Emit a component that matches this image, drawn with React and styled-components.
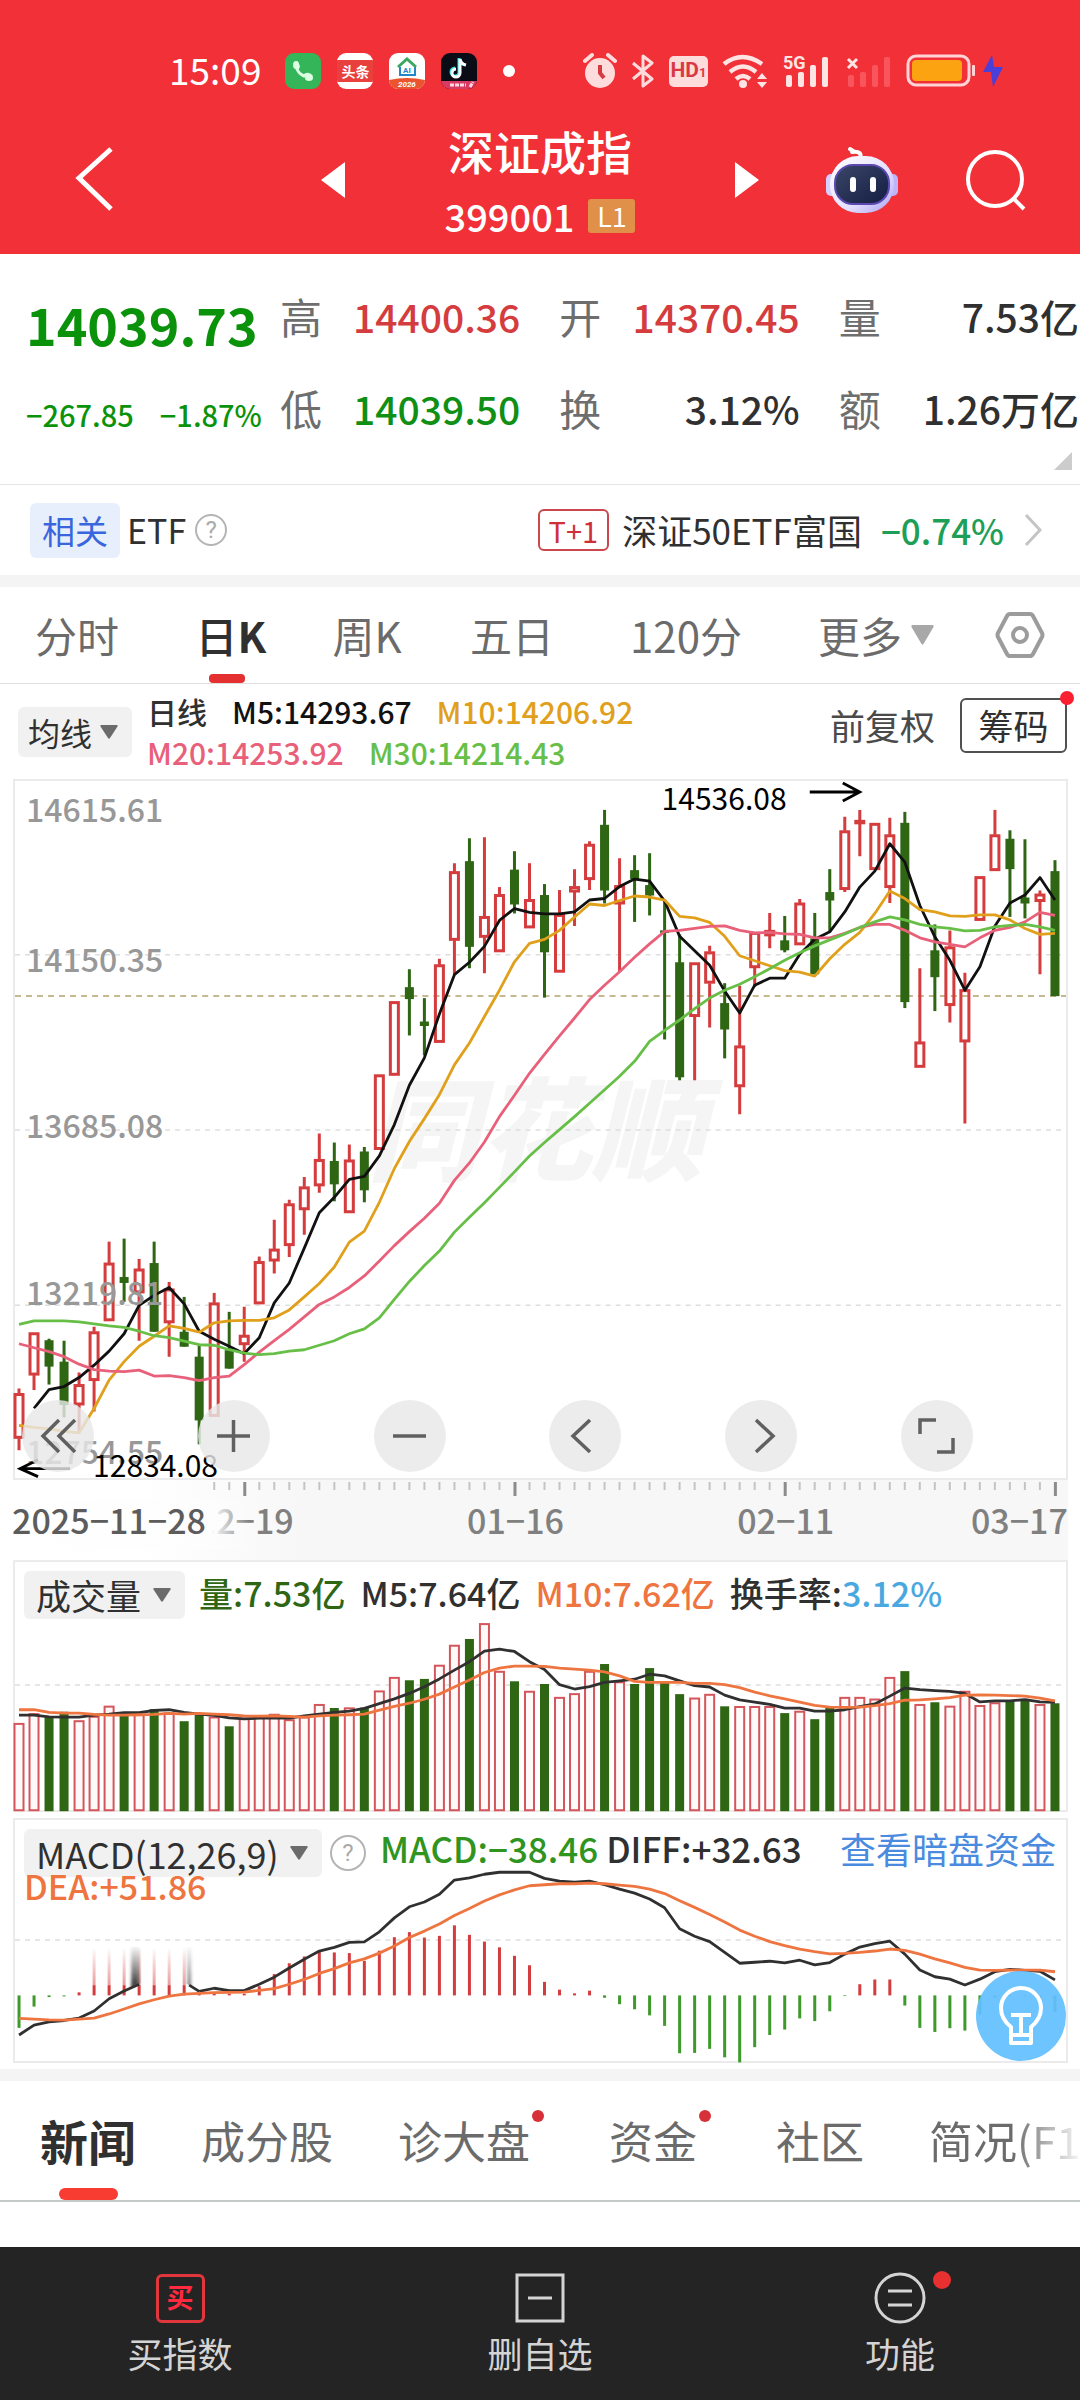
import React from "react";
import styled, { createGlobalStyle } from "styled-components";

const Global = createGlobalStyle`
  * { box-sizing: border-box; }
  body {
    margin: 0;
    background: #fff;
    color: #303030;
    font-family: "Noto Sans CJK SC", "Noto Sans", Roboto, sans-serif;
  }
  button, select {
    font: inherit;
    color: inherit;
    border: 0;
    background: none;
    padding: 0;
    margin: 0;
    cursor: pointer;
  }
  svg { display: block; }
`;

const RED = "#d43c3e";
const GREEN = "#2f6614";

/* ---------- market data ---------- */

// [direction, high, bodyTop, bodyBottom, low]
const CANDLES = [
  ["r", 1222, 1232, 1322, 1346], ["r", 1110, 1110, 1195, 1225], ["g", 1122, 1125, 1178, 1214],
  ["g", 1126, 1168, 1255, 1280], ["r", 1190, 1214, 1255, 1310], ["r", 1098, 1108, 1206, 1268],
  ["r", 927, 970, 1086, 1086], ["g", 921, 998, 1010, 1048], ["r", 962, 982, 1030, 1126],
  ["g", 927, 970, 1108, 1108], ["r", 1008, 1022, 1090, 1158], ["g", 1038, 1108, 1138, 1138],
  ["g", 1135, 1158, 1286, 1334], ["r", 1030, 1050, 1278, 1278], ["g", 1068, 1145, 1182, 1182],
  ["r", 1058, 1115, 1134, 1168], ["r", 957, 967, 1052, 1052], ["r", 883, 942, 966, 991],
  ["r", 843, 851, 935, 958], ["r", 797, 817, 863, 913], ["r", 710, 762, 815, 829],
  ["g", 728, 765, 812, 846], ["r", 732, 763, 869, 869], ["g", 737, 746, 824, 848],
  ["r", 592, 592, 742, 742], ["r", 445, 445, 593, 593], ["g", 380, 416, 440, 513],
  ["g", 438, 485, 494, 553], ["r", 359, 371, 527, 527], ["r", 167, 184, 322, 390],
  ["g", 117, 163, 335, 378], ["r", 115, 274, 316, 388], ["r", 215, 230, 345, 345],
  ["g", 143, 180, 250, 268], ["r", 167, 240, 297, 297], ["g", 209, 231, 346, 437],
  ["r", 221, 270, 386, 386], ["r", 179, 214, 225, 293], ["r", 123, 129, 200, 221],
  ["g", 60, 90, 222, 248], ["r", 157, 212, 249, 384], ["g", 151, 181, 199, 285],
  ["g", 147, 211, 232, 272], ["g", 240, 302, 307, 521], ["g", 310, 366, 597, 603],
  ["r", 367, 367, 475, 603], ["r", 333, 345, 408, 497], ["g", 408, 448, 501, 559],
  ["r", 413, 534, 616, 671], ["r", 306, 306, 377, 416], ["r", 267, 302, 313, 338],
  ["g", 273, 322, 342, 346], ["r", 239, 247, 331, 331], ["g", 267, 318, 390, 390],
  ["g", 179, 225, 242, 303], ["r", 74, 102, 220, 225], ["r", 60, 81, 88, 153],
  ["r", 87, 87, 180, 180], ["r", 76, 110, 216, 247], ["g", 64, 86, 446, 458],
  ["r", 378, 526, 577, 577], ["g", 290, 342, 396, 464], ["r", 302, 335, 453, 487],
  ["r", 387, 421, 526, 690], ["r", 194, 194, 282, 282], ["r", 60, 110, 182, 182],
  ["g", 101, 118, 179, 275], ["g", 119, 236, 248, 278], ["r", 222, 229, 244, 390],
  ["g", 161, 183, 434, 434],
];

const MA5 = [
  1262, 1224, 1218, 1200, 1175, 1147, 1112, 1055, 1035, 1019, 1052, 1107, 1123, 1137, 1152,
  1120, 1050, 1010, 940, 869, 838, 802, 796, 755, 692, 613, 558, 470, 391, 366, 334, 282, 258,
  266, 269, 269, 265, 241, 238, 214, 199, 203, 243, 314, 343, 372, 424, 468, 412, 398, 398,
  350, 320, 305, 265, 215, 183, 128, 165, 252, 315, 362, 422, 375, 293, 247, 231, 196, 241,
];
const MA10 = [
  1296, 1300, 1303, 1308, 1311, 1262, 1205, 1168, 1137, 1117, 1096, 1101, 1109, 1090, 1086,
  1085, 1085, 1080, 1064, 1038, 1011, 978, 928, 906, 848, 780, 726, 680, 632, 572, 528, 475,
  422, 365, 328, 320, 302, 275, 249, 252, 242, 233, 235, 241, 274, 277, 286, 314, 353, 363,
  373, 383, 386, 394, 359, 330, 306, 268, 223, 238, 260, 265, 273, 274, 271, 271, 281, 298,
  310, 308,
];
const MA20 = [
  1132, 1140, 1148, 1158, 1173, 1184, 1187, 1188, 1185, 1197, 1196, 1200, 1206, 1200, 1197,
  1174, 1149, 1126, 1103, 1078, 1053, 1038, 1019, 996, 966, 935, 907, 880, 850, 804, 769, 727,
  676, 633, 589, 551, 514, 478, 441, 412, 385, 356, 329, 304, 302, 298, 294, 293, 302, 307,
  306, 309, 310, 317, 317, 308, 296, 290, 290, 302, 317, 325, 330, 335, 317, 302, 296, 285,
  266, 272,
];
const MA30 = [
  1093, 1086, 1086, 1086, 1088, 1092, 1096, 1099, 1107, 1116, 1120, 1127, 1134, 1135, 1144,
  1151, 1154, 1152, 1147, 1144, 1135, 1126, 1112, 1102, 1080, 1043, 1007, 975, 946, 908, 878,
  849, 818, 787, 755, 728, 702, 676, 649, 622, 595, 565, 525, 503, 482, 459, 438, 422, 410,
  395, 379, 362, 347, 333, 321, 309, 296, 285, 275, 281, 290, 295, 298, 303, 302, 295, 292,
  290, 295, 302,
];

const VOLUME = [
  511, 482, 494, 478, 503, 490, 460, 485, 485, 470, 480, 506, 487, 492, 521, 496, 494, 484,
  500, 492, 455, 467, 465, 466, 415, 375, 385, 381, 339, 280, 263, 216, 357, 388, 416, 396,
  434, 423, 357, 337, 388, 396, 349, 392, 426, 436, 425, 462, 461, 461, 461, 482, 475, 500,
  467, 434, 434, 439, 375, 358, 455, 450, 460, 416, 458, 450, 446, 440, 455, 453,
];
const VOL_MA5 = [
  488, 488, 493, 494, 494, 488, 485, 481, 481, 474, 472, 480, 485, 489, 496, 499, 497, 497,
  497, 490, 485, 480, 476, 468, 454, 440, 424, 404, 381, 355, 330, 299, 293, 300, 330, 353,
  398, 411, 404, 391, 387, 382, 367, 372, 387, 401, 405, 429, 443, 450, 456, 467, 467, 476,
  476, 472, 463, 455, 432, 408, 413, 416, 418, 424, 449, 446, 446, 442, 449, 450,
];
const VOL_MA10 = [
  472, 472, 480, 482, 482, 486, 488, 488, 487, 486, 483, 485, 483, 485, 487, 490, 491, 490,
  492, 494, 490, 488, 487, 485, 473, 462, 453, 441, 426, 405, 384, 362, 349, 343, 343, 344,
  349, 352, 355, 360, 372, 388, 391, 391, 391, 394, 394, 398, 407, 420, 431, 440, 450, 459,
  464, 465, 464, 460, 454, 444, 443, 440, 436, 429, 428, 429, 430, 432, 438, 446,
];

const MACD_ZERO = 1317;
const MACD = [
  1413, 1350, 1322, 1320, 1308, 1175, 1175, 1175, 1175, 1175, 1175, 1175, 1309, 1312, 1312,
  1312, 1290, 1254, 1222, 1202, 1186, 1190, 1192, 1215, 1185, 1145, 1130, 1146, 1141, 1110,
  1138, 1158, 1175, 1200, 1228, 1277, 1300, 1311, 1303, 1324, 1343, 1358, 1376, 1407, 1488,
  1487, 1475, 1500, 1515, 1470, 1434, 1418, 1385, 1393, 1364, 1319, 1284, 1270, 1270, 1347,
  1413, 1425, 1414, 1421, 1374, 1324, 1320, 1320, 1324, 1366,
];
const DIFF_HEAD = [1434, 1405, 1395, 1391, 1384, 1363, 1327, 1304, 1284];
const DIFF = [
  1305, 1296, 1303, 1303, 1284, 1263, 1236, 1210, 1186, 1175, 1160, 1159, 1129, 1088, 1055,
  1041, 1018, 976, 970, 959, 953, 953, 953, 971, 979, 982, 979, 990, 1003, 1015, 1032, 1058,
  1120, 1142, 1158, 1190, 1222, 1219, 1216, 1221, 1213, 1227, 1220, 1195, 1174, 1164, 1157,
  1195, 1242, 1262, 1269, 1286, 1269, 1247, 1240, 1243, 1246, 1271,
];
const DEA = [
  1385, 1387, 1389, 1390, 1387, 1384, 1372, 1357, 1342, 1330, 1319, 1313, 1311, 1309, 1308,
  1307, 1302, 1297, 1284, 1270, 1252, 1238, 1221, 1209, 1192, 1171, 1146, 1127, 1106, 1081,
  1060, 1038, 1020, 1005, 993, 990, 987, 987, 985, 987, 991, 995, 1003, 1016, 1037, 1057, 1078,
  1100, 1124, 1142, 1158, 1170, 1180, 1188, 1194, 1193, 1190, 1186, 1180, 1184, 1195, 1209,
  1221, 1234, 1242, 1243, 1242, 1242, 1242, 1247,
];

const colX = (i) => 4 + i * 15;
const priceY = (v) => v / 2.01 - 1;
const volumeY = (v) => v / 2.958 - 12;
const macdY = (v) => v / 2.958 - 270;
const points = (series, scale, from = 0) =>
  series.map((v, i) => `${colX(i + from)},${scale(v).toFixed(1)}`).join(" ");

/* ---------- header ---------- */

const Header = styled.header`
  background: #f13038;
  color: #fff;
`;
const StatusBar = styled.div`
  display: flex;
  align-items: center;
  justify-content: space-between;
  padding: 48px 76px 0 169px;
`;
const StatusGroup = styled.div`
  display: flex;
  align-items: center;
  gap: ${(p) => p.$gap}px;
  height: 46px;
`;
const Clock = styled.span`
  font-size: 37px;
  line-height: 40px;
  padding-bottom: 4px;
  margin-right: 8px;
`;
const AppIcon = styled.span`
  display: flex;
  flex-direction: column;
  align-items: center;
  justify-content: center;
  width: 36px;
  height: 36px;
  border-radius: 9px;
  overflow: hidden;
  background: ${(p) => p.$bg};
`;
const AppWord = styled.span`
  align-self: stretch;
  background: #e8403c;
  color: #fff;
  font-size: 14px;
  font-weight: 700;
  line-height: 22px;
  text-align: center;
`;
const Dot = styled.span`
  width: ${(p) => p.$size}px;
  height: ${(p) => p.$size}px;
  border-radius: 50%;
  background: ${(p) => p.$color};
`;
const HdBadge = styled.span`
  border-radius: 5px;
  background: #ffdcdc;
  color: #d83a44;
  font: 700 21px/28px "Roboto", sans-serif;
  width: 39px;
  text-align: center;
  white-space: nowrap;
  small { font-size: 13px; }
`;
const TitleBar = styled.div`
  display: grid;
  grid-template-columns: 1fr 438px 1fr;
  align-items: center;
  padding: 26px 0 14px;
`;
const Side = styled.div`
  display: flex;
  align-items: center;
  gap: 66px;
  justify-content: ${(p) => (p.$end ? "flex-end" : "flex-start")};
  padding: ${(p) => (p.$end ? "0 53px 0 0" : "0 0 0 75px")};
`;
const Switcher = styled.div`
  display: flex;
  align-items: center;
  justify-content: space-between;
`;
const TitleBlock = styled.div`
  display: flex;
  flex-direction: column;
  align-items: center;
  gap: 12px;
`;
const Title = styled.h1`
  margin: 0;
  font-size: 46px;
  font-weight: 500;
  line-height: 60px;
`;
const Code = styled.div`
  display: flex;
  align-items: center;
  gap: 14px;
  font-size: 38px;
  font-weight: 500;
  line-height: 48px;
`;
const Level = styled.span`
  background: #e09048;
  border-radius: 3px;
  width: 47px;
  text-align: center;
  font-size: 27px;
  font-weight: 400;
  line-height: 34px;
`;

/* ---------- quote ---------- */

const Quote = styled.section`
  display: flex;
  padding: 38px 1px 14px 0;
`;
const Main = styled.div`
  flex: 0 0 280px;
  padding-left: 26px;
  color: #0a930a;
  white-space: nowrap;
`;
const Price = styled.div`
  font-size: 52px;
  font-weight: 700;
  line-height: 64px;
`;
const Change = styled.div`
  display: flex;
  gap: 26px;
  margin-top: 34px;
  font-size: 29px;
  font-weight: 500;
  line-height: 48px;
`;
const Stats = styled.div`
  flex: 1;
  display: grid;
  grid-template-columns: repeat(3, 1fr);
  align-content: start;
  gap: 44px 39px;
`;
const Stat = styled.div`
  display: flex;
  justify-content: space-between;
  font-size: 39px;
  font-weight: 500;
  line-height: 48px;
  white-space: nowrap;
  color: ${(p) => p.$color || "#303030"};
`;
const StatName = styled.span`
  color: #6e6e6e;
  font-size: 42px;
  font-weight: 400;
`;
const Expand = styled.button`
  display: block;
  margin: 0 8px 14px auto;
`;
const Related = styled.section`
  display: flex;
  align-items: center;
  height: 91px;
  padding: 0 38px 0 30px;
  border-top: 1px solid #e6e6e6;
  font-size: 35px;
  line-height: 48px;
`;
const RelatedTag = styled.span`
  background: #e8effc;
  color: #3a66dd;
  border-radius: 6px;
  padding: 0 12px;
  font-size: 33px;
  line-height: 55px;
  margin-right: 7px;
`;
const Help = styled.button`
  width: ${(p) => p.$size}px;
  height: ${(p) => p.$size}px;
  border: 2px solid #b4b4b4;
  border-radius: 50%;
  color: #aaa;
  font: 24px/28px "Roboto", sans-serif;
`;
const EtfName = styled.span`
  font-size: 34px;
  margin-right: 9px;
`;
const EtfLink = styled.a`
  display: flex;
  align-items: center;
  margin-left: auto;
  color: #303030;
  text-decoration: none;
  white-space: nowrap;
`;
const TradeTag = styled.span`
  border: 2px solid #c9474d;
  border-radius: 6px;
  color: #cf3038;
  font-size: 29px;
  line-height: 38px;
  padding: 0 9px;
  margin-right: 13px;
`;
const EtfChange = styled.span`
  color: #1d9f58;
  font-weight: 500;
  margin: 0 20px 0 19px;
`;
const Band = styled.div`
  height: 12px;
  background: #f4f4f4;
`;

/* ---------- period tabs ---------- */

const Periods = styled.nav`
  display: grid;
  grid-template-columns: 154fr 154fr 118fr 172fr 176fr 204fr 84fr;
  padding-right: 18px;
  height: 97px;
  border-bottom: 1px solid #e0e0e0;
`;
const Period = styled.button`
  position: relative;
  display: flex;
  align-items: center;
  justify-content: center;
  gap: 9px;
  font-size: 42px;
  line-height: 60px;
  font-weight: ${(p) => (p.$active ? 500 : 400)};
  color: ${(p) => (p.$active ? "#303030" : "#6b6b6b")};
  b { font-weight: 700; }
  &::after {
    content: "";
    display: ${(p) => (p.$active ? "block" : "none")};
    position: absolute;
    bottom: 0;
    left: calc(50% - 22px);
    width: 36px;
    height: 9px;
    border-radius: 4px;
    background: #e43030;
  }
`;

/* ---------- legends ---------- */

const MaBar = styled.div`
  display: flex;
  align-items: center;
  padding: 7px 13px 6px 18px;
`;
const PickerBox = styled.label`
  display: inline-grid;
  align-items: center;
  background: #f1f1f1;
  border-radius: 6px;
  font-size: ${(p) => p.$font}px;
  height: ${(p) => p.$height}px;
  & > * { grid-area: 1 / 1; }
  & > svg { justify-self: end; margin-right: 14px; pointer-events: none; }
`;
const PickerSelect = styled.select`
  appearance: none;
  color: #303030;
  font-weight: 400;
  line-height: 46px;
  padding: 0 ${(p) => p.$right}px 0 ${(p) => p.$left}px;
  outline: none;
`;
const MaLines = styled.div`
  margin-left: 15px;
  font-size: 30px;
  font-weight: 500;
  line-height: 41px;
`;
const MaLine = styled.div`
  display: flex;
  gap: 25px;
`;
const Tint = styled.span`
  color: ${(p) => p.$color};
  white-space: nowrap;
`;
const MaActions = styled.div`
  display: flex;
  align-items: center;
  gap: 25px;
  margin: 0 0 14px auto;
  font-size: 35px;
  line-height: 48px;
`;
const TextButton = styled.button`
  color: #4a4a4a;
`;
const ChipButton = styled.button`
  position: relative;
  width: 107px;
  height: 55px;
  border: 2px solid #505050;
  border-radius: 6px;
  font-size: 35px;
  line-height: 48px;
  & > span { position: absolute; top: -9px; right: -9px; }
`;

/* ---------- chart panels ---------- */

const Charts = styled.div`
  padding: 0 12px 6px 13px;
`;
const Panel = styled.section`
  display: grid;
  border: 2px solid #ebebeb;
  margin-bottom: ${(p) => p.$gap || 0}px;
  & > * { grid-area: 1 / 1; min-width: 0; }
`;
const Plot = styled.svg`
  width: 100%;
  height: auto;
  overflow: visible;
`;
const AxisText = styled.text`
  font-size: 32px;
  font-weight: 500;
  fill: #989898;
`;
const MarkText = styled.text`
  font-size: 30px;
  fill: #000;
`;
const DateText = styled.text`
  font-size: 34px;
  font-weight: 500;
  fill: ${(p) => (p.$strong ? "#5c5c5c" : "#808080")};
`;
const Watermark = styled.text`
  font-size: 112px;
  font-weight: 900;
  font-style: italic;
  fill: #f5f5f5;
`;
const Controls = styled.div`
  align-self: end;
  display: flex;
  justify-content: space-between;
  padding: 0 93px 6px 7px;
`;
const Round = styled.button`
  display: grid;
  place-items: center;
  width: 72px;
  height: 72px;
  border-radius: 50%;
  background: rgba(232, 232, 232, 0.82);
`;
const Legend = styled.div`
  display: flex;
  align-items: flex-start;
  align-self: start;
  padding: 9px 10px 0 9px;
  font-size: 34px;
  font-weight: 500;
  line-height: ${(p) => p.$line}px;
`;
const LegendItem = styled.span`
  color: ${(p) => p.$color || "#303030"};
  margin-left: ${(p) => p.$gap}px;
  white-space: nowrap;
`;
const MacdLegend = styled.div`
  align-self: start;
`;
const MacdItem = styled(LegendItem)`
  font-size: 35px;
`;
const DeaLine = styled.div`
  color: #ee7440;
  font-size: 34px;
  font-weight: 500;
  line-height: 18px;
  padding-left: 9px;
`;
const HelpSlot = styled.span`
  display: flex;
  align-items: center;
  height: 48px;
  padding-left: 8px;
`;
const FundLink = styled.a`
  margin-left: auto;
  color: #4a8be0;
  font-size: 36px;
  font-weight: 400;
  text-decoration: none;
  white-space: nowrap;
`;
const Fab = styled.button`
  justify-self: end;
  align-self: end;
  display: grid;
  place-items: center;
  width: 90px;
  height: 90px;
  border-radius: 50%;
  background: rgba(98, 191, 255, 0.92);
`;

/* ---------- content tabs and bottom bar ---------- */

const NewsTabs = styled.nav`
  display: flex;
  align-items: center;
  gap: 65px;
  height: 121px;
  padding-left: 40px;
  border-bottom: 2px solid #c4caca;
  overflow: hidden;
`;
const NewsTab = styled.button`
  position: relative;
  flex: none;
  display: flex;
  height: 119px;
  font-size: ${(p) => (p.$active ? 48 : 44)}px;
  line-height: 119px;
  font-weight: ${(p) => (p.$active ? 700 : 400)};
  color: ${(p) => (p.$active ? "#303030" : "#6b6b6b")};
  & > span { margin: 29px 0 0 2px; }
  &:last-child {
    background: linear-gradient(to right, #6b6b6b 84px, rgba(107, 107, 107, 0.1) 148px);
    background-clip: text;
    color: transparent;
  }
  &::after {
    content: "";
    display: ${(p) => (p.$active ? "block" : "none")};
    position: absolute;
    bottom: 0;
    left: calc(50% - 29px);
    width: 59px;
    height: 12px;
    border-radius: 6px;
    background: #f83c32;
  }
`;
const Feed = styled.main`
  height: 45px;
`;
const BottomBar = styled.nav`
  display: grid;
  grid-template-columns: repeat(3, 1fr);
  background: #242424;
  padding: 25px 0 18px;
`;
const BottomItem = styled.button`
  display: flex;
  flex-direction: column;
  align-items: center;
  color: #d4d4d4;
  font-size: 35px;
  line-height: 58px;
`;
const BottomIcon = styled.span`
  position: relative;
  display: grid;
  place-items: center;
  height: 52px;
`;
const BottomDot = styled(Dot)`
  position: absolute;
  top: -1px;
  right: -25px;
`;
const BuyBox = styled.span`
  border: 3px solid #e0363c;
  border-radius: 6px;
  width: 49px;
  height: 49px;
  color: #ff2a40;
  font-size: 27px;
  font-weight: 700;
  line-height: 40px;
  text-align: center;
`;

/* ---------- drawings ---------- */

const Caret = ({ w = 18, h = 14, color = "#6b6b6b" }) => (
  <svg width={w} height={h} viewBox="0 0 18 14" preserveAspectRatio="none" aria-hidden="true">
    <path d="M1 0h16q1 0 .5 1.500L10 13q-1 1.500-2 0L.5 1.500Q0 0 1 0z" fill={color} />
  </svg>
);

const Robot = () => (
  <svg width="74" height="68" viewBox="0 0 74 68" aria-hidden="true">
    <defs>
      <linearGradient id="shell" x1="0" y1="0" x2="1" y2="1">
        <stop offset="0" stopColor="#fff" />
        <stop offset="0.6" stopColor="#e4e0ff" />
        <stop offset="1" stopColor="#a9a0f0" />
      </linearGradient>
      <linearGradient id="visor" x1="0" y1="0" x2="1" y2="1">
        <stop offset="0" stopColor="#3a4668" />
        <stop offset="1" stopColor="#141d42" />
      </linearGradient>
    </defs>
    <path d="M35 13c2-6-1-8-8-7M28 5l-3-2" stroke="#fff" strokeWidth="4" fill="none" strokeLinecap="round" />
    <rect x="1" y="28" width="11" height="22" rx="5" fill="#d5d0ff" />
    <rect x="62" y="28" width="11" height="22" rx="5" fill="#bdb4fa" />
    <rect x="5" y="10" width="64" height="57" rx="28" fill="url(#shell)" />
    <rect x="10" y="19" width="54" height="39" rx="18" fill="url(#visor)" stroke="#5b48b0" strokeWidth="2" />
    <rect x="25" y="31" width="6" height="15" rx="3" fill="#fff" />
    <rect x="45" y="31" width="6" height="15" rx="3" fill="#fff" />
  </svg>
);

const Signal = ({ dim }) => (
  <svg width="48" height="36" viewBox="0 0 48 36" aria-hidden="true">
    {[0, 1, 2, 3].map((n) => (
      <rect
        key={n}
        x={4 + n * 12}
        y={[22, 19, 12, 4][n]}
        width="6"
        height={[12, 15, 22, 30][n]}
        rx="2"
        fill={dim ? "#f8565c" : "#ffe4e4"}
      />
    ))}
    {dim ? (
      <path d="M4 6l9 9M13 6l-9 9" stroke="#ffe4e4" strokeWidth="3" />
    ) : (
      <text x="1" y="16" fontSize="18" fontWeight="700" fontFamily="Roboto" fill="#ffe4e4">5G</text>
    )}
  </svg>
);

const StatusIcons = () => (
  <StatusGroup $gap={14}>
    <svg width="34" height="36" viewBox="0 0 34 36" aria-hidden="true">
      <circle cx="17" cy="20" r="15" fill="#ffdcdc" />
      <path d="M2 8l7-6M32 8l-7-6" stroke="#ffdcdc" strokeWidth="4" strokeLinecap="round" />
      <path d="M17 12v8l4 5" stroke="#d83a44" strokeWidth="4" fill="none" />
    </svg>
    <svg width="24" height="34" viewBox="0 0 24 34" aria-hidden="true">
      <path d="M2 9l19 16-9 7V2l9 7L2 25" fill="none" stroke="#ffdcdc" strokeWidth="3" strokeLinejoin="round" />
    </svg>
    <HdBadge>HD<small>1</small></HdBadge>
    <svg width="46" height="36" viewBox="0 0 46 36" aria-hidden="true">
      <g fill="none" stroke="#ffe4e4" strokeWidth="4.500">
        <path d="M2 11q18-14 38 0" />
        <path d="M8 19q13-11 26 0" />
        <path d="M14 26q7-6 14 0" />
      </g>
      <circle cx="21" cy="31" r="4" fill="#ffe4e4" />
      <path d="M35 26l5-6 5 6zM35 29l5 6 5-6z" fill="#ffe4e4" />
    </svg>
    <Signal />
    <Signal dim />
    <svg width="98" height="36" viewBox="0 0 98 36" aria-hidden="true">
      <rect x="2" y="3" width="61" height="29" rx="8" fill="none" stroke="#ffd4d6" strokeWidth="3" />
      <rect x="6" y="7" width="50" height="21" rx="4" fill="#fca311" />
      <rect x="66" y="12" width="3" height="11" rx="1" fill="#ffd4d6" />
      <path d="M86 2L77 19h8l2 15 10-20h-9z" fill="#4a3fd8" />
    </svg>
  </StatusGroup>
);

const Candle = ({ data: [dir, high, top, bottom, low], index }) => {
  const x = colX(index);
  const y1 = priceY(top);
  const y2 = priceY(bottom);
  if (dir === "g") {
    return (
      <g fill={GREEN}>
        <rect x={x - 1.5} y={priceY(high)} width="3" height={priceY(low) - priceY(high)} />
        <rect x={x - 4.5} y={y1} width="9" height={y2 - y1} />
      </g>
    );
  }
  return (
    <g stroke={RED} strokeWidth="3" fill="none">
      <path d={`M${x} ${priceY(high)}V${y1}M${x} ${y2}V${priceY(low)}`} />
      <rect x={x - 4} y={y1 + 1} width="8" height={Math.max(y2 - y1 - 2, 1)} />
    </g>
  );
};

const Dashes = ({ y, color = "#dedede", dash = "5 5" }) => (
  <path d={`M0 ${y}H1050`} stroke={color} strokeWidth="1.5" strokeDasharray={dash} />
);

const Trace = ({ series, scale, color, from, width = 2.8 }) => (
  <polyline
    points={points(series, scale, from)}
    fill="none"
    stroke={color}
    strokeWidth={width}
    strokeLinejoin="round"
  />
);

const PricePlot = () => (
  <Plot viewBox="0 0 1050 696" role="img" aria-label="日K线">
    <Watermark x="352" y="391">同花顺</Watermark>
    <Dashes y={priceY(351)} />
    <Dashes y={priceY(703)} />
    <Dashes y={priceY(1055)} />
    <Dashes y={priceY(434)} color="#b3a36e" dash="6 5" />
    {CANDLES.map((c, i) => <Candle key={i} data={c} index={i} />)}
    <Trace series={MA5} scale={priceY} from={1} color="#111" />
    <Trace series={MA10} scale={priceY} color="#e0a01c" />
    <Trace series={MA20} scale={priceY} color="#e8607a" />
    <Trace series={MA30} scale={priceY} color="#68bf48" />
    {[["14615.61", 84], ["14150.35", 386], ["13685.08", 719], ["13219.81", 1055], ["12754.55", 1373]].map(
      ([t, v]) => <AxisText key={t} x="11" y={Math.round(priceY(v))}>{t}</AxisText>
    )}
    <MarkText x="646" y="29">14536.08</MarkText>
    <MarkText x="78" y="695">12834.08</MarkText>
    <g fill="none" stroke="#000" strokeWidth="2.8">
      <path d="M794 11h50M827 2l17 9-17 9" />
      <path d="M55 687H6M23 678L5 687l18 8" />
    </g>
  </Plot>
);

const DateAxis = () => (
  <Plot viewBox="0 0 1054 80" aria-label="日期">
    <defs>
      <linearGradient id="axisShade" x1="0" x2="1" y1="0" y2="0">
        <stop offset="0" stopColor="#fff" />
        <stop offset="0.12" stopColor="#fff" />
        <stop offset="0.28" stopColor="#f7f7f7" />
        <stop offset="1" stopColor="#f7f7f7" />
      </linearGradient>
      <linearGradient id="dateFade" x1="0" x2="1" y1="0" y2="0">
        <stop offset="0" stopColor="#fff" />
        <stop offset="0.84" stopColor="#fdfdfd" />
        <stop offset="1" stopColor="#fdfdfd" stopOpacity="0" />
      </linearGradient>
    </defs>
    <rect width="1054" height="80" fill="url(#axisShade)" />
    {CANDLES.map((_, i) => {
      if (i < 13) return null;
      const major = (i - 15) % 18 === 0;
      return (
        <rect key={i} x={colX(i) + 1} y="2" width={major ? 3 : 2} height={major ? 14 : 8} fill={major ? "#8c8c8c" : "#c4c4c4"} />
      );
    })}
    <DateText x="232" y="54" textAnchor="middle">12−19</DateText>
    <DateText x="502" y="54" textAnchor="middle">01−16</DateText>
    <DateText x="772" y="54" textAnchor="middle">02−11</DateText>
    <DateText x="1054" y="54" textAnchor="end">03−17</DateText>
    <rect y="20" width="236" height="50" fill="url(#dateFade)" />
    <DateText x="-1" y="54" $strong>2025−11−28</DateText>
  </Plot>
);

const VolumePlot = () => (
  <Plot viewBox="0 0 1050 248" role="img" aria-label="成交量">
    <Dashes y={volumeY(399)} />
    {VOLUME.map((v, i) => {
      const up = CANDLES[i][0] === "r";
      const y = volumeY(v);
      return up ? (
        <rect key={i} x={colX(i) - 4.5} y={y + 1} width="9" height={247 - y} fill="#fffafa" stroke="#d4565c" strokeWidth="2" />
      ) : (
        <rect key={i} x={colX(i) - 4.5} y={y} width="9" height={249 - y} fill={GREEN} />
      );
    })}
    <Trace series={VOL_MA5} scale={volumeY} color="#303030" />
    <Trace series={VOL_MA10} scale={volumeY} color="#ee7440" />
  </Plot>
);

const MacdPlot = () => (
  <Plot viewBox="0 0 1050 241" role="img" aria-label="MACD">
    <defs>
      <linearGradient id="redFade" x1="0" x2="0" y1="0" y2="1">
        <stop offset="0" stopColor={RED} stopOpacity="0" />
        <stop offset="0.78" stopColor={RED} stopOpacity="0.5" />
        <stop offset="0.8" stopColor={RED} />
      </linearGradient>
      <linearGradient id="inkFade" x1="0" x2="0" y1="0" y2="1">
        <stop offset="0" stopColor="#303030" stopOpacity="0.05" />
        <stop offset="0.6" stopColor="#303030" stopOpacity="0.6" />
        <stop offset="1" stopColor="#303030" />
      </linearGradient>
      <filter id="soft" x="-50%" width="200%"><feGaussianBlur stdDeviation="1.5 0" /></filter>
    </defs>
    <Dashes y={macdY(1153)} />
    {MACD.map((v, i) => {
      const top = macdY(Math.min(v, MACD_ZERO));
      const bottom = macdY(Math.max(v, MACD_ZERO));
      const fill = v > MACD_ZERO ? "#3f9a2c" : i >= 5 && i <= 11 ? "url(#redFade)" : RED;
      return <rect key={i} x={colX(i) - 1.5} y={top} width="3" height={bottom - top} fill={fill} />;
    })}
    <path d="M116 127h8v36l-8 4z" fill="url(#inkFade)" filter="url(#soft)" />
    <path d="M172 127h4v40l-4-4z" fill="url(#inkFade)" opacity="0.6" filter="url(#soft)" />
    <Trace series={DIFF_HEAD} scale={macdY} color="#303030" />
    <path d={`M174 165L184 ${macdY(1305)}`} stroke="#303030" strokeWidth="2.8" />
    <Trace series={DIFF} scale={macdY} from={12} color="#303030" />
    <Trace series={DEA} scale={macdY} color="#ee7440" />
  </Plot>
);

const Picker = ({ label, value, font = 35, height = 48, left = 12, right = 43 }) => (
  <PickerBox $font={font} $height={height}>
    <PickerSelect aria-label={label} $left={left} $right={right}>
      <option>{value}</option>
    </PickerSelect>
    <Caret />
  </PickerBox>
);

const STATS = [
  ["高", "14400.36", "#d43c3e"],
  ["开", "14370.45", "#d43c3e"],
  ["量", "7.53亿"],
  ["低", "14039.50", "#0f8f14"],
  ["换", "3.12%"],
  ["额", "1.26万亿"],
];

const CONTROL_ICONS = [
  ["最早", "M20 3L4 19l16 16M36 3L20 19l16 16"],
  ["放大", "M3 19h33M19.500 3v32"],
  ["缩小", "M3 19h33"],
  ["向左", "M24 3L7 19l17 16"],
  ["向右", "M14 3l17 16-17 16"],
  ["全屏", "M3 17V3h16M36 21v14H20"],
];

const NEWS_TABS = [
  ["新闻"], ["成分股"], ["诊大盘", true], ["资金", true], ["社区"], ["简况(F10)"],
];

export default function App() {
  return (
    <>
      <Global />
      <Header>
        <StatusBar>
          <StatusGroup $gap={16}>
            <Clock>15:09</Clock>
            <AppIcon $bg="#34b55a">
              <svg width="24" height="24" viewBox="0 0 24 24" aria-hidden="true">
                <path d="M5 3q4 4 1 7 2 5 7 7 4-4 8 1" fill="none" stroke="#dcffe4" strokeWidth="3" />
                <ellipse cx="5" cy="6" rx="3" ry="4" fill="#dcffe4" />
                <ellipse cx="18" cy="19" rx="4" ry="3" fill="#dcffe4" />
              </svg>
            </AppIcon>
            <AppIcon $bg="#fff"><AppWord>头条</AppWord></AppIcon>
            <AppIcon $bg="#fff">
              <svg width="36" height="36" viewBox="0 0 36 36" aria-hidden="true">
                <path d="M11 14v8h15v-8" fill="none" stroke="#2387c8" strokeWidth="2" />
                <path d="M9 14L18 6l9 8" fill="none" stroke="#3aa860" strokeWidth="3" />
                <text x="14" y="20" fontSize="8" fontWeight="700" fill="#2387c8" fontFamily="Roboto">AI</text>
                <path d="M0 27q18-4 36 0v9H0z" fill="#ea5530" />
                <text x="9" y="34" fontSize="8" fontWeight="700" fontStyle="italic" fill="#fff" fontFamily="Roboto">2026</text>
              </svg>
            </AppIcon>
            <AppIcon $bg="#0c0c16">
              <svg width="36" height="36" viewBox="0 0 36 36" aria-hidden="true">
                <path d="M18 5v14a4 4 0 1 1-4-4M18 6q1 5 6 6" fill="none" stroke="#28e0e0" strokeWidth="3" />
                <path d="M19 6v14a4 4 0 1 1-4-4M19 6q1 5 6 6" fill="none" stroke="#fff" strokeWidth="3" />
                <path d="M0 28h36v8H0z" fill="#d83a62" />
                <path d="M9 32h16M29 34l3-5" stroke="#ffd8e4" strokeWidth="3" strokeDasharray="4 1" />
              </svg>
            </AppIcon>
            <StatusGroup $gap={0}>
              <svg width="10" height="12" aria-hidden="true" />
              <Dot $size={12} $color="#fff" />
            </StatusGroup>
          </StatusGroup>
          <StatusIcons />
        </StatusBar>
        <TitleBar>
          <Side>
            <button aria-label="返回">
              <svg width="40" height="66" viewBox="0 0 40 66" aria-hidden="true">
                <path d="M36 2L4 31l32 31" fill="none" stroke="#fff" strokeWidth="5" />
              </svg>
            </button>
          </Side>
          <Switcher>
            <button aria-label="上一个">
              <svg width="24" height="36" viewBox="0 0 24 36" aria-hidden="true"><path d="M24 0v36L0 18z" fill="#fff" /></svg>
            </button>
            <TitleBlock>
              <Title>深证成指</Title>
              <Code>399001<Level>L1</Level></Code>
            </TitleBlock>
            <button aria-label="下一个">
              <svg width="24" height="36" viewBox="0 0 24 36" aria-hidden="true"><path d="M0 0v36l24-18z" fill="#fff" /></svg>
            </button>
          </Switcher>
          <Side $end>
            <button aria-label="智能助手"><Robot /></button>
            <button aria-label="搜索">
              <svg width="62" height="62" viewBox="0 0 62 62" aria-hidden="true">
                <circle cx="30" cy="30" r="27" fill="none" stroke="#fff" strokeWidth="4" />
                <path d="M48 49l11 11" stroke="#fff" strokeWidth="4" />
              </svg>
            </button>
          </Side>
        </TitleBar>
      </Header>

      <Quote>
        <Main>
          <Price>14039.73</Price>
          <Change><span>−267.85</span><span>−1.87%</span></Change>
        </Main>
        <Stats>
          {STATS.map(([name, value, color]) => (
            <Stat key={name} $color={color}><StatName>{name}</StatName>{value}</Stat>
          ))}
        </Stats>
      </Quote>
      <Expand aria-label="展开">
        <svg width="18" height="18" viewBox="0 0 18 18" aria-hidden="true"><path d="M18 0v18H0z" fill="#ccc" /></svg>
      </Expand>

      <Related>
        <RelatedTag>相关</RelatedTag>
        <EtfName>ETF</EtfName>
        <Help $size={32} aria-label="ETF说明">?</Help>
        <EtfLink href="#etf">
          <TradeTag>T+1</TradeTag>
          深证50ETF富国
          <EtfChange>−0.74%</EtfChange>
          <svg width="18" height="34" viewBox="0 0 18 34" aria-hidden="true">
            <path d="M2 2l14 15L2 32" fill="none" stroke="#c4c4c4" strokeWidth="3" />
          </svg>
        </EtfLink>
      </Related>
      <Band />

      <Periods>
        <Period>分时</Period>
        <Period $active><span>日<b>K</b></span></Period>
        <Period>周K</Period>
        <Period>五日</Period>
        <Period>120分</Period>
        <Period>更多<Caret w={23} h={20} color="#a8a8a8" /></Period>
        <Period aria-label="设置">
          <svg width="50" height="48" viewBox="0 0 50 48" aria-hidden="true">
            <g fill="none" stroke="#9c9c9c" strokeWidth="4" strokeLinejoin="round">
              <path d="M15 3h20q2 0 3 2l9 17q1 2 0 4l-9 17q-1 2-3 2H15q-2 0-3-2L3 26q-1-2 0-4l9-17q1-2 3-2z" />
              <circle cx="25" cy="24" r="7" />
            </g>
          </svg>
        </Period>
      </Periods>

      <MaBar>
        <Picker label="指标" value="均线" font={32} height={50} left={10} right={39} />
        <MaLines>
          <MaLine>
            <Tint>日线</Tint>
            <Tint $color="#111">M5:14293.67</Tint>
            <Tint $color="#e0a01c">M10:14206.92</Tint>
          </MaLine>
          <MaLine>
            <Tint $color="#e8607a">M20:14253.92</Tint>
            <Tint $color="#68bf48">M30:14214.43</Tint>
          </MaLine>
        </MaLines>
        <MaActions>
          <TextButton>前复权</TextButton>
          <ChipButton>筹码<Dot $size={14} $color="#fa2030" /></ChipButton>
        </MaActions>
      </MaBar>

      <Charts>
        <Panel>
          <PricePlot />
          <Controls>
            {CONTROL_ICONS.map(([name, d]) => (
              <Round key={name} aria-label={name}>
                <svg width="39" height="38" viewBox="0 0 39 38" aria-hidden="true">
                  <path d={d} fill="none" stroke="#606060" strokeWidth="3.500" />
                </svg>
              </Round>
            ))}
          </Controls>
        </Panel>
        <DateAxis />
        <Panel $gap={6}>
          <VolumePlot />
          <Legend $line={44}>
            <Picker label="副图指标" value="成交量" />
            <LegendItem $gap={14} $color={GREEN}>量:7.53亿</LegendItem>
            <LegendItem $gap={15}>M5:7.64亿</LegendItem>
            <LegendItem $gap={15} $color="#ee7440">M10:7.62亿</LegendItem>
            <LegendItem $gap={15}>换手率:<Tint $color="#4aa8e0">3.12%</Tint></LegendItem>
          </Legend>
        </Panel>
        <Panel>
          <MacdPlot />
          <MacdLegend>
            <Legend $line={38}>
              <Picker label="副图指标" value="MACD(12,26,9)" font={36} />
              <HelpSlot><Help $size={36} aria-label="MACD说明">?</Help></HelpSlot>
              <MacdItem $gap={14} $color="#2f9420">MACD:−38.46</MacdItem>
              <MacdItem $gap={8}>DIFF:+32.63</MacdItem>
              <FundLink href="#funds">查看暗盘资金</FundLink>
            </Legend>
            <DeaLine>DEA:+51.86</DeaLine>
          </MacdLegend>
          <Fab aria-label="提示">
            <svg width="46" height="62" viewBox="0 0 46 62" aria-hidden="true">
              <g fill="none" stroke="#fff" strokeWidth="4" strokeLinejoin="round">
                <path d="M13 50V42Q3 34 3 23a20 20 0 0 1 40 0q0 11-10 19v8z" />
                <path d="M13 50h20v8H13zM13 30h20M23 30v20" />
              </g>
            </svg>
          </Fab>
        </Panel>
      </Charts>
      <Band />

      <NewsTabs>
        {NEWS_TABS.map(([name, dot], i) => (
          <NewsTab key={name} $active={i === 0}>
            {name}
            {dot && <Dot $size={12} $color="#d83038" />}
          </NewsTab>
        ))}
      </NewsTabs>
      <Feed />

      <BottomBar>
        <BottomItem>
          <BottomIcon><BuyBox>买</BuyBox></BottomIcon>
          买指数
        </BottomItem>
        <BottomItem>
          <BottomIcon>
            <svg width="50" height="50" viewBox="0 0 50 50" aria-hidden="true">
              <path d="M2 2h46v46H2zM13 25h24" fill="none" stroke="#d4d4d4" strokeWidth="3" />
            </svg>
          </BottomIcon>
          删自选
        </BottomItem>
        <BottomItem>
          <BottomIcon>
            <svg width="52" height="52" viewBox="0 0 52 52" aria-hidden="true">
              <circle cx="26" cy="26" r="24" fill="none" stroke="#d4d4d4" strokeWidth="3" />
              <path d="M14 19h24M14 33h24" stroke="#d4d4d4" strokeWidth="3" />
            </svg>
            <BottomDot $size={18} $color="#e83030" />
          </BottomIcon>
          功能
        </BottomItem>
      </BottomBar>
    </>
  );
}
